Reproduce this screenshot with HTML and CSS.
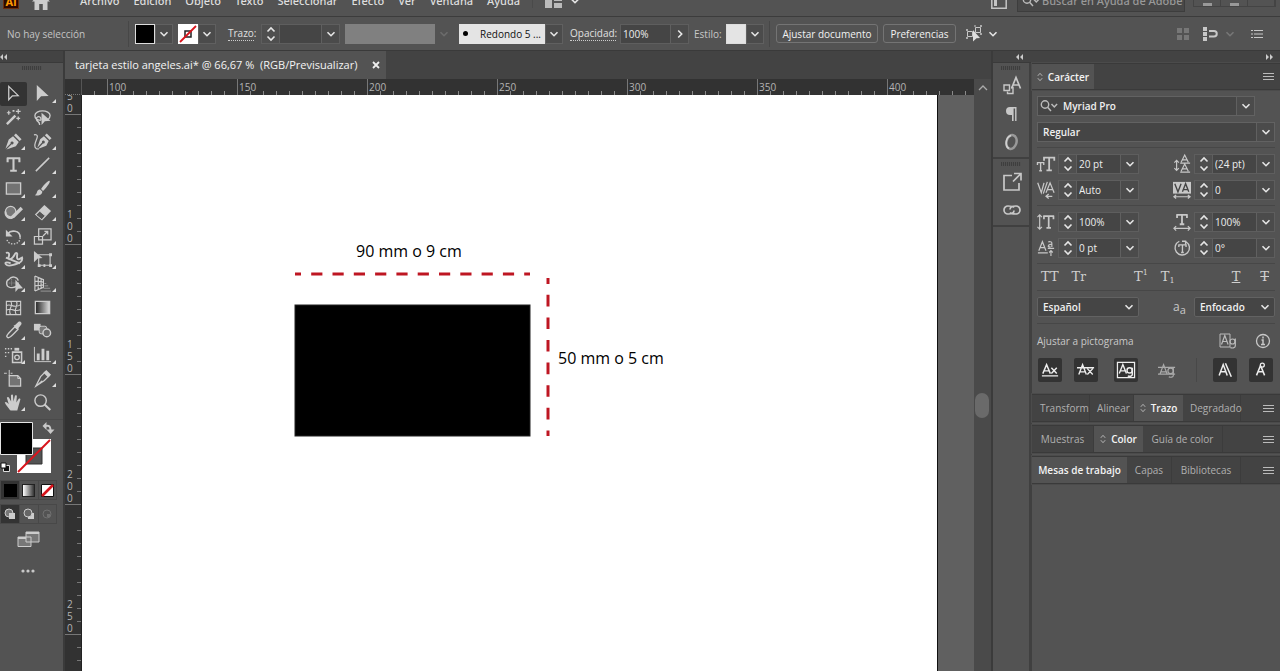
FILE: index.html
```html
<!DOCTYPE html>
<html lang="es">
<head>
<meta charset="utf-8">
<title>tarjeta estilo angeles.ai</title>
<link rel="stylesheet" href="styles.css">
</head>
<body>
<svg class="defs" aria-hidden="true">
  <symbol id="down" viewBox="0 0 10 10"><path d="M1.5 3.2 5 6.7 8.5 3.2" fill="none" stroke="currentColor" stroke-width="1.6"/></symbol>
  <symbol id="spin" viewBox="0 0 10 16"><path d="M1.5 5.5 5 2l3.500 3.500M1.500 10.500 5 14l3.500-3.500" fill="none" stroke="currentColor" stroke-width="1.600"/></symbol>
  <symbol id="menu" viewBox="0 0 11 9"><path d="M0 1.500h11M0 4.500h11M0 7.500h11" stroke="currentColor"/></symbol>
  <symbol id="updown" viewBox="0 0 6 10"><path d="M.8 3.800 3 1.300l2.200 2.500M.8 6.200 3 8.700l2.200-2.500" fill="none" stroke="currentColor"/></symbol>
  <symbol id="lens" viewBox="0 0 18 12"><circle cx="5" cy="4.500" r="3.700" fill="none" stroke="currentColor" stroke-width="1.400"/><path d="M7.600 7.300 11 11M11.500 4l2.800 3 2.800-3" fill="none" stroke="currentColor" stroke-width="1.500"/></symbol>
  <linearGradient id="fade"><stop offset="0" stop-color="#222"/><stop offset="1" stop-color="#ddd"/></linearGradient>
</svg>

<div class="app">
  <header class="menubar">
    <span class="logo">Ai</span>
    <button class="home" aria-label="Inicio"><svg width="18" height="18" viewBox="0 0 18 18"><path d="M9 1 0 9.500h2.500V18h4.700v-6h3.600v6h4.700V9.500H18z" fill="#ccc"/></svg></button>
    <nav class="menus">
      <a href="#">Archivo</a><a href="#">Edición</a><a href="#">Objeto</a><a href="#">Texto</a><a href="#">Seleccionar</a><a href="#">Efecto</a><a href="#">Ver</a><a href="#">Ventana</a><a href="#">Ayuda</a>
    </nav>
    <button class="arrange" aria-label="Organizar documentos"><svg width="17" height="14" viewBox="0 0 17 14"><path d="M0 0h7v14H0zM9 0h8v7H9zM9 9h8v5H9z" fill="#bbb"/></svg><svg class="chev"><use href="#down"/></svg></button>
    <span class="grow"></span>
    <button class="workspace" aria-label="Espacio de trabajo"><svg width="16" height="16" viewBox="0 0 16 16"><path d="M.8.8h14.400v14.400H.8z" fill="none" stroke="#c4c4c4" stroke-width="1.500"/><path d="M3 3h3v10H3z" fill="#c4c4c4"/></svg></button>
    <label class="help"><svg width="18" height="12"><use href="#lens"/></svg><input type="text" placeholder="Buscar en Ayuda de Adobe" aria-label="Buscar en Ayuda de Adobe"></label>
    <div class="window-buttons"><button aria-label="Minimizar"><i></i></button><button aria-label="Maximizar"><i></i></button><button aria-label="Cerrar"></button></div>
  </header>

  <section class="control">
    <span class="selection">No hay selección</span>
    <span class="sep"></span>
    <span class="swatch-pick"><button class="swatch black" aria-label="Relleno"></button><button class="dd" aria-label="Opciones de relleno"><svg class="chev"><use href="#down"/></svg></button></span>
    <span class="swatch-pick"><button class="swatch" aria-label="Trazo"><svg width="20" height="20" viewBox="0 0 20 20"><path fill="#fff" d="M0 0h20v20H0z"/><path d="M7 7h6v6H7z" fill="none" stroke="#222" stroke-width="1.500"/><path d="M2 18 18 2" stroke="#d8141c" stroke-width="1.800"/></svg></button><button class="dd" aria-label="Opciones de trazo"><svg class="chev"><use href="#down"/></svg></button></span>
    <label class="dotted stroke-label" for="weight">Trazo:</label>
    <span class="field weight"><button class="spin" aria-label="Cambiar grosor"><svg width="10" height="16"><use href="#spin"/></svg></button><input id="weight" type="text"><button class="dd" aria-label="Grosores"><svg class="chev"><use href="#down"/></svg></button></span>
    <span class="profile"><span class="blank"></span><svg class="chev"><use href="#down"/></svg></span>
    <span class="brush"><button class="brush-name"><i></i>Redondo 5 ...</button><button class="dd" aria-label="Pinceles"><svg class="chev"><use href="#down"/></svg></button></span>
    <label class="dotted opacity-label" for="opacity">Opacidad:</label>
    <span class="field opacity"><input id="opacity" type="text" value="100%"><button class="dd" aria-label="Más opacidad"><svg class="chev side"><use href="#down"/></svg></button></span>
    <span class="style-label">Estilo:</span>
    <span class="swatch-pick"><button class="swatch pale" aria-label="Estilo"></button><button class="dd" aria-label="Estilos gráficos"><svg class="chev"><use href="#down"/></svg></button></span>
    <span class="sep"></span>
    <button class="push">Ajustar documento</button>
    <button class="push prefs">Preferencias</button>
    <button class="similar" aria-label="Seleccionar objetos similares"><svg width="17" height="17" viewBox="0 0 17 17"><g fill="none" stroke="#c8c8c8"><path d="M1.500 6.500h5v5h-5zM9.500 2.500h5v5h-5z"/><path d="M0 5h2M0 13h2M8 1h2M14 1h2M14 9h2M1 4v2M1 12v2M15 0v2M15 8v2"/></g><path d="m7 5 7 8-3.500.2L7 16.500z" fill="#ddd"/></svg><svg class="chev"><use href="#down"/></svg></button>
    <span class="grow"></span>
    <span class="tail"><svg width="12" height="12" viewBox="0 0 12 12"><path d="M0 0h5v5H0zM7 0h5v5H7zM0 7h5v5H0zM7 7h5v5H7z" fill="#777"/></svg>
    <svg width="14" height="14" viewBox="0 0 14 14"><path d="M0 0h4v4H0zM0 5h4v4H0zM0 10h4v4H0z" fill="#c8c8c8"/><path d="M6 4h5a2.500 2.500 0 0 1 0 5.500H6" fill="none" stroke="#c8c8c8" stroke-width="2"/></svg>
    <svg class="chev dim"><use href="#down"/></svg>
    <button class="list" aria-label="Opciones del panel"><svg width="12" height="10" viewBox="0 0 12 10"><path d="M0 1.500h2M3 1.500h9M0 5h2M3 5h9M0 8.500h2M3 8.500h9" stroke="#c8c8c8" stroke-width="1.200"/></svg></button></span>
  </section>

  <main class="work">
    <aside class="toolbox">
      <div class="strip"><svg width="7" height="6" viewBox="0 0 7 6"><path d="M3 0v6L0 3zM7 0v6L4 3z" fill="#ccc"/></svg></div>
      <div class="grip"></div>
      <div class="tools">
        <button class="active" aria-label="Selección"><svg viewBox="0 0 20 20"><path d="M5 2.500v14l3.800-4 6.200-.3z" fill="none" stroke="#d0d0d0" stroke-width="1.300"/></svg></button>
        <button class="more" aria-label="Selección directa"><svg viewBox="0 0 20 20"><path d="M4 1v17l4.500-5 8-.5z" fill="#ccc"/></svg></button>
        <button aria-label="Varita mágica"><svg viewBox="0 0 20 20"><path d="m3 17 9-9" stroke="#ccc" stroke-width="2.600"/><path d="M15 1v5M12.500 3.500h5M5 3v4M3 5h4M15 9v4M13 11h4" stroke="#ccc" stroke-width="1.300"/><path d="M9 2h2v2H9zM10 6l2 2" fill="#ccc"/></svg></button>
        <button aria-label="Lazo"><svg viewBox="0 0 20 20"><path d="M8 13c-4 0-6-2-6-5s4-5 8-5 8 2 8 5-2 4-3 5M8 13c1-1 0-4-2-4s-3 2-2 4 3 1 3 5" fill="none" stroke="#ccc" stroke-width="1.400"/><path d="M9 5v13l3.500-4 6-.5z" fill="#ccc"/></svg></button>
        <button class="more" aria-label="Pluma"><svg viewBox="0 0 20 20"><path d="m12.500 1.500 6 6-2 2-6-6z" fill="#ccc"/><path d="M9.500 4.500 15.500 10.500 12.500 15 2.500 18.500 8 13a1.600 1.600 0 1 0-1-1L1.500 17.500 5 8z" fill="#ccc"/></svg></button>
        <button class="more" aria-label="Curvatura"><svg viewBox="0 0 20 20"><path d="m14.500 1.500 5 5-2 2-5-5z" fill="#ccc"/><path d="m11.500 4.500 5 5-2.500 5L5 18l5.500-6a1.500 1.500 0 1 0-1-1L4.500 16.500 7.500 7.500z" fill="#ccc"/><path d="M1 3c6-1 3 4 1.500 8S2 18 6 18" fill="none" stroke="#ccc" stroke-width="1.300"/></svg></button>
        <button class="more" aria-label="Texto"><svg viewBox="0 0 20 20"><path d="M3 3.500h14M3.800 3v4.500M16.200 3v4.500M10 3.500V17M6.500 16.500h7" stroke="#ccc" stroke-width="2.200" fill="none"/></svg></button>
        <button class="more" aria-label="Línea"><svg viewBox="0 0 20 20"><path d="M3 17 17 3" stroke="#ccc" stroke-width="1.600"/></svg></button>
        <button class="more" aria-label="Rectángulo"><svg viewBox="0 0 20 20"><path d="M2.500 4h15v12h-15z" fill="#737373" stroke="#ccc" stroke-width="1.400"/></svg></button>
        <button class="more" aria-label="Pincel"><svg viewBox="0 0 20 20"><path d="M17.500 2c1.500 1-5 9-7 10.500L8.500 10.500C10 8 16 1 17.500 2zM7.500 11l2.300 2.200c0 4-4.800 4.800-7.800 3.800 2-1 2-2.500 2.500-4s1.500-2 3-2z" fill="#ccc"/></svg></button>
        <button class="more" aria-label="Shaper"><svg viewBox="0 0 20 20"><circle cx="7" cy="9" r="5.500" fill="#777" stroke="#ccc" stroke-width="1.300"/><path d="m7 17 1.500-4L17.500 4l2.500 2.500L11 15.500z" fill="#ccc"/><path d="M1.500 9c0 6 4 8 7.500 6" fill="none" stroke="#ccc" stroke-width="2"/></svg></button>
        <button class="more" aria-label="Borrador"><svg viewBox="0 0 20 20"><path d="m2 12 10-10 7 6.500L9.500 18.500z" fill="#ccc"/><path d="M3 12.500 7 8.500l6 5-3.800 4z" fill="#555" stroke="#ccc"/></svg></button>
        <button class="more" aria-label="Rotar"><svg viewBox="0 0 20 20"><path d="M4 7c3-4 13-4 13 4" fill="none" stroke="#ccc" stroke-width="1.700"/><path d="M2 3v7h7z" fill="#ccc"/><path d="M17 11c0 9-14 9-14 1" fill="none" stroke="#ccc" stroke-width="1.400" stroke-dasharray="1.500 1.500"/></svg></button>
        <button class="more" aria-label="Escala"><svg viewBox="0 0 20 20"><path d="M6 2h13v11.500H6zM1.500 10h8.500v8H1.500z" fill="none" stroke="#ccc" stroke-width="1.300"/><path d="m10.500 9.500 5-5M12 4.500h3.500v3.500" fill="none" stroke="#ccc" stroke-width="1.300"/></svg></button>
        <button class="more" aria-label="Anchura"><svg viewBox="0 0 20 20"><path d="M2 3c3-1 4 1 3 4s1 4 4 1 2-5 4-5 0 4 1 6 3 0 5-1c1 4-3 6-7 7s-8 3-10 0 3-2 5-1M2 8l15 6" fill="none" stroke="#ccc" stroke-width="2"/></svg></button>
        <button class="more" aria-label="Transformación libre"><svg viewBox="0 0 20 20"><path d="M6 5h12v11H6z" fill="none" stroke="#ccc" stroke-width="1.200"/><path d="M17 3.500h3v3h-3zM17 15h3v3h-3zM5 15h3v3H5zM11 15h2v3h-2zM1 1v12l4-4 5-.5z" fill="#ccc"/></svg></button>
        <button class="more" aria-label="Creador de formas"><svg viewBox="0 0 20 20"><path d="M6 14a4.500 4.500 0 0 1-.5-8.500C8 1.500 14 3 15 7M6 14c5 1 9-1 9-5" fill="none" stroke="#ccc" stroke-width="1.400"/><path d="M3 9.500h9M8 5v8" stroke="#999" stroke-dasharray="1 1"/><path d="M12 6v13l3-3.500 5-.5z" fill="#ccc"/></svg></button>
        <button class="more" aria-label="Rejilla de perspectiva"><svg viewBox="0 0 20 20"><path d="M2 2v16M2 2l9 4v8L2 18M5.500 3.500v13M8.500 5v10M2 7.500l9 1M2 12.500l9-1" fill="none" stroke="#ccc" stroke-width="1.200"/><path d="M12 10h2M12 12.500h4M11 15h7M8 18h11" stroke="#999"/></svg></button>
        <button aria-label="Malla"><svg viewBox="0 0 20 20"><path d="M2.500 3.500h15v14h-15zM2.500 8c5-3 8 4 15-1M2.500 13c6-4 8 3 15-1M7 3.500c4 5-4 8 0 14M13 3.500c3 5-4 8 0 14" fill="none" stroke="#ccc" stroke-width="1.200"/></svg></button>
        <button aria-label="Degradado"><svg viewBox="0 0 20 20"><path d="M2.500 3.500h15v13h-15z" fill="url(#fade)" stroke="#ccc" stroke-width="1.400"/></svg></button>
        <button class="more" aria-label="Cuentagotas"><svg viewBox="0 0 20 20"><path d="M3.500 17c-2-1 1-4 8-11l3 3C8 16 5 19 3.500 17z" fill="none" stroke="#ccc" stroke-width="1.400"/><path d="m10 5 2-1 3-3c2-1.500 4.500 1 3 3l-2.500 3-.5 2.500z" fill="#ccc"/></svg></button>
        <button aria-label="Fusión"><svg viewBox="0 0 20 20"><path d="M1 3h7v7H1z" fill="#ccc"/><rect x="6.500" y="5.500" width="8" height="8" rx="2" fill="#777" stroke="#ccc"/><circle cx="14.500" cy="12.500" r="4" fill="#666" stroke="#ccc" stroke-width="1.500"/></svg></button>
        <button class="more" aria-label="Rociar símbolos"><svg viewBox="0 0 20 20"><path d="M9 7.500h9.500v11H9z" fill="none" stroke="#ccc" stroke-width="1.600"/><circle cx="13.700" cy="13" r="2.400" fill="none" stroke="#ccc" stroke-width="1.400"/><path d="M11 3h5v3h-5z" fill="#ccc"/><path d="M1 4h8M1 8h6M1 12h2" stroke="#ccc" stroke-width="1.500" stroke-dasharray="1.500 1.500"/></svg></button>
        <button class="more" aria-label="Gráfica"><svg viewBox="0 0 20 20"><path d="M1.500 2v15.500H19" fill="none" stroke="#ccc"/><path d="M4 9h3v7H4zM9 4h3v12H9zM14 6h3v10h-3z" fill="#ccc"/></svg></button>
        <button aria-label="Mesa de trabajo"><svg viewBox="0 0 20 20"><path d="M5.500 7h9l3 3v8h-12z" fill="#737373" stroke="#ccc" stroke-width="1.300"/><path d="M14.500 7v3h3M5.500 1v6M0 4.500h3M7 4.500h2" fill="none" stroke="#ccc"/></svg></button>
        <button class="more" aria-label="Sector"><svg viewBox="0 0 20 20"><path d="M3 18 8 8l5-5 4 4-5 5z" fill="none" stroke="#ccc" stroke-width="1.300"/><path d="m11 4 3-3 5 5-3 3zM3 18l6-6 2 1z" fill="#ccc"/></svg></button>
        <button class="more" aria-label="Mano"><svg viewBox="0 0 20 20"><path d="M6 17.500C4.500 15 2 13 .8 10c1-1.200 2.200-.5 4.200 1.800L3 5c.8-1.200 2-.8 2.500.3L7.500 9 7.300 2.500c.6-1.300 2.100-1 2.200.3L10 9l1.500-6c1-1 2.200-.5 2 .7L13 10l2.500-4c1.200-.6 2.200.2 1.600 1.400L15.500 13l-1.500 5.500H7z" fill="#ccc"/></svg></button>
        <button aria-label="Zoom"><svg viewBox="0 0 20 20"><circle cx="8" cy="8" r="6" fill="none" stroke="#ccc" stroke-width="1.500"/><path d="m12.200 12 6 6" stroke="#ccc" stroke-width="2.200"/></svg></button>
      </div>
      <button class="colors" aria-label="Relleno y trazo"><svg width="56" height="54" viewBox="0 0 56 54"><path d="M17 18h34v34H17z" fill="#fff"/><path d="M26 27h16v16H26z" fill="#535353" stroke="#333"/><path d="M18 51 50 19" stroke="#d8141c" stroke-width="2"/><path d="M.5 1.500h32v32H.5z" fill="#000" stroke="#e4e4e4"/><path d="M45 5c5-1 5.500 1 5.500 5" fill="none" stroke="#c8c8c8" stroke-width="2"/><path d="M46.500 1v8l-4-4zM46.500 8.500h8L50.500 13z" fill="#c8c8c8"/><path d="M4.500 44.500h5v6h-6v-3" fill="#111" stroke="#ddd"/><path d="M1 42h5v5H1z" fill="#fff" stroke="#111"/></svg></button>
      <div class="modes paint"><button class="on" aria-label="Color"><i class="solid"></i></button><button aria-label="Degradado"><i class="grad"></i></button><button aria-label="Ninguno"><svg width="13" height="13" viewBox="0 0 13 13"><path d="M.5.5h12v12H.5z" fill="#fff" stroke="#111"/><path d="M1 12 12 1" stroke="#d8141c" stroke-width="2.600"/></svg></button></div>
      <div class="modes draw"><button class="on" aria-label="Dibujar normal"><svg width="12" height="12" viewBox="0 0 12 12"><circle cx="5" cy="5" r="4" fill="#777" stroke="#ccc"/><path d="M5 5h6v6H5z" fill="#ccc"/></svg></button><button aria-label="Dibujar detrás"><svg width="12" height="12" viewBox="0 0 12 12"><path d="M5 5h6v6H5z" fill="#ccc"/><circle cx="5" cy="5" r="4" fill="#666" stroke="#ccc"/></svg></button><button aria-label="Dibujar dentro" disabled><svg width="12" height="12" viewBox="0 0 12 12"><circle cx="6" cy="6" r="4" fill="none" stroke="#707070"/><path d="M6 6h3v3H6z" fill="#707070"/></svg></button></div>
      <button class="screen" aria-label="Modo de pantalla"><svg width="23" height="16" viewBox="0 0 23 16"><path d="M1 6h13v9.500H1zM9 1h13v10H9z" fill="#777" stroke="#ccc"/><path d="M9 1h13v2H9zM1 6h8v2H1z" fill="#ccc"/></svg></button>
      <button class="screen dots" aria-label="Editar barra de herramientas"><svg width="14" height="4" viewBox="0 0 14 4"><circle cx="2" cy="2" r="1.600"/><circle cx="7" cy="2" r="1.600"/><circle cx="12" cy="2" r="1.600"/></svg></button>
    </aside>

    <section class="document">
      <div class="tabs"><div class="tab"><span>tarjeta estilo angeles.ai* @ 66,67 %&nbsp; (RGB/Previsualizar)</span><button aria-label="Cerrar documento"><svg width="8" height="8" viewBox="0 0 8 8"><path d="m1 1 6 6M7 1 1 7" stroke="#eee" stroke-width="1.800"/></svg></button></div></div>
      <div class="sheet">
        <div class="corner"></div>
        <div class="ruler-x"><span>100</span><span>150</span><span>200</span><span>250</span><span>300</span><span>350</span><span>400</span></div>
        <div class="ruler-y"><span>50</span><span>100</span><span>150</span><span>200</span><span>250</span><span></span></div>
        <div class="canvas">
          <svg class="artboard" role="img" aria-label="Tarjeta de 90 por 50 mm">
            <text x="274" y="162">90 mm o 9 cm</text>
            <text x="476" y="269">50 mm o 5 cm</text>
            <path d="M213 179h235" class="cut" stroke-dasharray="6 10.200 11.200 10.100 11.200 10.100 11.200 10.100 11.200 10.100 11.200 10.100 11.200 10.100 11.200 10.100 11.200 10.100 11.200 10.100 11.200 10.100 6"/>
            <path d="M466 183v158" class="cut" stroke-dasharray="6 10.800 11.600 11 11.600 11 11.600 11 11.600 11 11.600 11 11.600 11 6"/>
            <rect x="213" y="210" width="235" height="131" fill="#000" stroke="#222"/>
          </svg>
          <div class="outside"></div>
        </div>
        <div class="scroll"><svg width="10" height="6" viewBox="0 0 10 6"><path d="M1 5 5 1l4 4" fill="none" stroke="#aaa" stroke-width="1.300"/></svg><i class="thumb"></i></div>
      </div>
    </section>

    <div class="right">
      <div class="right-strip"><svg width="7" height="6" viewBox="0 0 7 6"><path d="M3 0v6L0 3zM7 0v6L4 3z" fill="#ccc"/></svg><svg width="7" height="6" viewBox="0 0 7 6"><path d="M0 0v6l3-3zM4 0v6l3-3z" fill="#ccc"/></svg></div>
      <div class="right-row">
      <aside class="dock">
        <div class="dock-group"><div class="grip"></div>
          <button aria-label="Estilos de carácter"><svg viewBox="0 0 20 20"><path d="M2 9h5.500v5.500H2z" fill="none" stroke="#c8c8c8" stroke-width="1.400"/><path d="M9 11.500h2v6H5.500v-2" fill="none" stroke="#c8c8c8" stroke-width="1.400"/><path d="m9.500 12.500 4.500-11 4.500 11M11 9h6" fill="none" stroke="#c8c8c8" stroke-width="1.700"/></svg></button>
          <button aria-label="Párrafo"><svg viewBox="0 0 20 20"><path d="M14.500 3H8a4 4 0 0 0 0 8h2v6h1.600V4.500h1.500V17h1.400z" fill="#c8c8c8"/></svg></button>
          <button aria-label="OpenType"><svg viewBox="0 0 20 20"><ellipse cx="9.500" cy="10" rx="5" ry="7" transform="rotate(15 9.500 10)" fill="none" stroke="#999" stroke-width="2.500"/><path d="M9 3.500c-6 2-6 11-2 13" fill="none" stroke="#d0d0d0" stroke-width="1.600"/></svg></button>
        </div>
        <div class="dock-group"><div class="grip"></div>
          <button aria-label="Exportar recursos"><svg viewBox="0 0 20 20"><path d="M10 3.500H2V18h15v-7M12 1.500h7v7M18.500 2 11 9.500" fill="none" stroke="#c8c8c8" stroke-width="1.700"/></svg></button>
          <button aria-label="Vínculos"><svg viewBox="0 0 20 20"><path d="M12 7.500C11 6 9 6 6 6a4 4 0 0 0 0 8c3 0 6-.5 6-3.500M8 12.500c1 1.500 3 1.500 6 1.500a4 4 0 0 0 0-8c-3 0-6 .5-6 3.500" fill="none" stroke="#c8c8c8" stroke-width="1.700"/></svg></button>
        </div>
      </aside>

      <aside class="panels">
        <div class="panel-tabs first"><button class="current"><svg width="6" height="10"><use href="#updown"/></svg>Carácter</button><span class="grow"></span><button class="burger" aria-label="Menú"><svg width="11" height="9"><use href="#menu"/></svg></button></div>
        <div class="character">
          <div class="combo family"><svg width="18" height="12"><use href="#lens"/></svg><input type="text" value="Myriad Pro" aria-label="Familia de fuentes"><button class="dd" aria-label="Familias"><svg class="chev"><use href="#down"/></svg></button></div>
          <div class="combo"><input type="text" value="Regular" aria-label="Estilo de fuente"><button class="dd" aria-label="Estilos"><svg class="chev"><use href="#down"/></svg></button></div>
          <hr>
          <div class="metrics">
            <label for="m1"><svg viewBox="0 0 20 20"><path d="M0 8.500h8M.5 8v3M7.500 8v3M4 8.500V18M2.500 17.500h3" fill="none" stroke="#c8c8c8" stroke-width="1.500"/><path d="M7 3h13M7.800 2v4.500M19.200 2v4.500M13.500 3v14M10.500 17h6" fill="none" stroke="#c8c8c8" stroke-width="2"/></svg></label>
            <span class="field"><button class="spin" aria-label="Cambiar tamaño"><svg width="10" height="16"><use href="#spin"/></svg></button><input id="m1" type="text" value="20 pt"><button class="dd" aria-label="Tamaños"><svg class="chev"><use href="#down"/></svg></button></span>
            <label for="m2"><svg viewBox="0 0 20 20"><path d="M4 6v11M1.500 8.500 4 6l2.500 2.500M1.500 14.500 4 17l2.500-2.500" fill="none" stroke="#c8c8c8" stroke-width="1.300"/><path d="m9 8 4-8 4 8M10.500 5.500h5M9 18l4-8 4 8M10.500 15.500h5M8 9h11M8 19h11" fill="none" stroke="#c8c8c8" stroke-width="1.300"/></svg></label>
            <span class="field"><button class="spin" aria-label="Cambiar interlineado"><svg width="10" height="16"><use href="#spin"/></svg></button><input id="m2" type="text" value="(24 pt)"><button class="dd" aria-label="Interlineados"><svg class="chev"><use href="#down"/></svg></button></span>
            <label for="m3"><svg viewBox="0 0 20 20"><path d="m.8 2 4 11 3-11M11.500 1 7 14M10 13l4.500-11L19 13M11.500 9.500h6M10 17h7M13 14.500 10 17l3 2.500" fill="none" stroke="#c8c8c8" stroke-width="1.400"/></svg></label>
            <span class="field"><button class="spin" aria-label="Cambiar kerning"><svg width="10" height="16"><use href="#spin"/></svg></button><input id="m3" type="text" value="Auto"><button class="dd" aria-label="Kerning"><svg class="chev"><use href="#down"/></svg></button></span>
            <label for="m4"><svg viewBox="0 0 20 20"><path d="M0 1h20v13H0z" fill="#c8c8c8"/><path d="m2 3 3.500 9L9 3M10.500 12 14 3l3.500 9M12 9.500h4.500" fill="none" stroke="#444" stroke-width="1.500"/><path d="M1 17.500h18M3.500 15.500l-2.500 2 2.500 2M16.500 15.500l2.500 2-2.500 2" fill="none" stroke="#c8c8c8" stroke-width="1.300"/></svg></label>
            <span class="field"><button class="spin" aria-label="Cambiar tracking"><svg width="10" height="16"><use href="#spin"/></svg></button><input id="m4" type="text" value="0"><button class="dd" aria-label="Tracking"><svg class="chev"><use href="#down"/></svg></button></span>
          </div>
          <hr>
          <div class="metrics">
            <label for="m5"><svg viewBox="0 0 20 20"><path d="M3 2v16M.5 4.500 3 2l2.500 2.500M.5 15.500 3 18l2.500-2.500" fill="none" stroke="#c8c8c8" stroke-width="1.300"/><path d="M7 3.500h12M7.700 3v4M18.300 3v4M13 3.500v13M10.500 16.500h5" fill="none" stroke="#c8c8c8" stroke-width="1.900"/></svg></label>
            <span class="field"><button class="spin" aria-label="Cambiar escala vertical"><svg width="10" height="16"><use href="#spin"/></svg></button><input id="m5" type="text" value="100%"><button class="dd" aria-label="Escalas verticales"><svg class="chev"><use href="#down"/></svg></button></span>
            <label for="m6"><svg viewBox="0 0 20 20"><path d="M4 2h12M4.500 1.500v4M15.500 1.500v4M10 2v10.500M7.500 12.500h5" fill="none" stroke="#c8c8c8" stroke-width="2"/><path d="M1 17h18M3.500 14.500 1 17l2.500 2.500M16.500 14.500 19 17l-2.500 2.500" fill="none" stroke="#c8c8c8" stroke-width="1.300"/></svg></label>
            <span class="field"><button class="spin" aria-label="Cambiar escala horizontal"><svg width="10" height="16"><use href="#spin"/></svg></button><input id="m6" type="text" value="100%"><button class="dd" aria-label="Escalas horizontales"><svg class="chev"><use href="#down"/></svg></button></span>
            <label for="m7"><svg viewBox="0 0 20 20"><path d="m2 13 4-10 4 10M3.500 9.500h5M1 15.500h11M12.500 3.500c1-.8 4-.8 4 1V9M16.500 6c-5-.5-5 4-1.500 2.500M12 10.500h7M15.500 19v-6M13.500 15l2-2 2 2" fill="none" stroke="#c8c8c8" stroke-width="1.300"/></svg></label>
            <span class="field"><button class="spin" aria-label="Cambiar línea de base"><svg width="10" height="16"><use href="#spin"/></svg></button><input id="m7" type="text" value="0 pt"><button class="dd" aria-label="Líneas de base"><svg class="chev"><use href="#down"/></svg></button></span>
            <label for="m8"><svg viewBox="0 0 20 20"><path d="M7 2.500a8 8 0 1 0 7.500.5M10 2.500h4v4" fill="none" stroke="#c8c8c8" stroke-width="1.500"/><path d="M6 6.500h9M6.500 6v3M14.500 6v3M10.500 6.500V15M9 15h3" fill="none" stroke="#c8c8c8" stroke-width="1.500"/></svg></label>
            <span class="field"><button class="spin" aria-label="Cambiar rotación"><svg width="10" height="16"><use href="#spin"/></svg></button><input id="m8" type="text" value="0°"><button class="dd" aria-label="Rotaciones"><svg class="chev"><use href="#down"/></svg></button></span>
          </div>
          <hr>
          <div class="caps">
            <button aria-label="Todo en mayúsculas">TT</button><button aria-label="Versalitas">T<small>r</small></button><button class="super" aria-label="Superíndice">T<sup>1</sup></button><button class="sub" aria-label="Subíndice">T<sub>1</sub></button><button class="under" aria-label="Subrayado"><u>T</u></button><button class="strike" aria-label="Tachado"><s>T</s></button>
          </div>
          <hr>
          <div class="language">
            <span class="select"><select aria-label="Idioma"><option>Español</option></select><svg class="chev"><use href="#down"/></svg></span>
            <label for="aa" class="aa"><span>a</span><sub>a</sub></label>
            <span class="select"><select id="aa"><option>Enfocado</option></select><svg class="chev"><use href="#down"/></svg></span>
          </div>
          <hr>
          <div class="snap-head"><span>Ajustar a pictograma</span><span class="grow"></span>
            <button aria-label="Ajuste visible"><svg width="18" height="16" viewBox="0 0 18 16"><path d="M1 1h10v13H1z" fill="none" stroke="#bbb"/><path d="m2.500 11.500 3.300-9 3.300 9M3.500 8.500h4.500" fill="none" stroke="#bbb" stroke-width="1.200"/><circle cx="13.500" cy="8.500" r="2.500" fill="none" stroke="#bbb" stroke-width="1.200"/><path d="M16.300 5.500V13c0 2-3.300 2.500-5 1.500" fill="none" stroke="#bbb" stroke-width="1.200"/></svg></button>
            <button aria-label="Información"><svg width="16" height="16" viewBox="0 0 16 16"><circle cx="8" cy="8" r="6.500" fill="none" stroke="#c8c8c8" stroke-width="1.300"/><path d="M8 3.500v2M6.500 7H8v4.500M6 11.500h4" fill="none" stroke="#c8c8c8" stroke-width="1.500"/></svg></button>
          </div>
          <div class="snap">
            <button class="on" aria-label="Línea de base"><svg viewBox="0 0 20 20"><path d="M2 14 6.200 4l4.200 10M3.500 11h5.500M11.500 7.500l6 6.500M17.500 7.500l-6 6.500M1 16.500h18" fill="none" stroke="#eee" stroke-width="1.600"/></svg></button>
            <button class="on" aria-label="Altura de x"><svg viewBox="0 0 20 20"><path d="M2 15 6.200 4l4.200 11M3.500 12h5.500M11.500 8.500l6 6.500M17.500 8.500l-6 6.500M0 7.500h19" fill="none" stroke="#eee" stroke-width="1.500"/></svg></button>
            <button class="on gap" aria-label="Límites del pictograma"><svg viewBox="0 0 20 20"><path d="M.5 1.500h19v17H.5z" fill="none" stroke="#eee" stroke-width="1.400"/><path d="M2.500 14 6.500 4l4 10M4 11h5M17 7.500V15c0 2-3 2.500-5 1.500" fill="none" stroke="#eee" stroke-width="1.600"/><circle cx="14" cy="10.500" r="2.900" fill="none" stroke="#eee" stroke-width="1.600"/></svg></button>
            <button aria-label="Guías de proximidad"><svg viewBox="0 0 20 20"><path d="M2 15 6.200 4l4.200 11M3.500 12h5.500M17 7.500V16c0 2-3 2.500-5 1.500M0 7h19M0 14.500h19" fill="none" stroke="#aaa" stroke-width="1.300"/><circle cx="14" cy="11" r="3" fill="none" stroke="#aaa" stroke-width="1.300"/></svg></button>
            <span class="divider"></span>
            <button class="on" aria-label="Guías angulares"><svg viewBox="0 0 20 20"><path d="M3.500 16 8 4l4.500 12M5 12h6M10.500 2.500 17 17.500" fill="none" stroke="#eee" stroke-width="1.700"/></svg></button>
            <button class="on" aria-label="Punto de anclaje"><svg viewBox="0 0 20 20"><path d="M5 16 9.500 5 14 16M6.500 12h6" fill="none" stroke="#eee" stroke-width="1.700"/><circle cx="11.500" cy="4.500" r="2.200" fill="#333" stroke="#eee" stroke-width="1.400"/></svg></button>
          </div>
        </div>
        <div class="panel-tabs"><button class="t1">Transform</button><button class="t2">Alinear</button><button class="current t3"><svg width="6" height="10"><use href="#updown"/></svg>Trazo</button><button class="t4">Degradado</button><span class="grow"></span><button class="burger" aria-label="Menú"><svg width="11" height="9"><use href="#menu"/></svg></button></div>
        <div class="panel-tabs"><button class="t5">Muestras</button><button class="current t6"><svg width="6" height="10"><use href="#updown"/></svg>Color</button><button class="t7">Guía de color</button><span class="grow"></span><button class="burger" aria-label="Menú"><svg width="11" height="9"><use href="#menu"/></svg></button></div>
        <div class="panel-tabs"><button class="current t8">Mesas de trabajo</button><button class="t9">Capas</button><button class="t10">Bibliotecas</button><span class="grow"></span><button class="burger" aria-label="Menú"><svg width="11" height="9"><use href="#menu"/></svg></button></div>
        <div class="empty"></div>
      </aside>
      </div>
    </div>
  </main>
</div>
</body>
</html>
```

FILE: styles.css
```css
* { box-sizing: border-box; }
body { margin: 0; background: #535353; color: #dedede; font: 500 10px/14px "Open Sans", sans-serif; overflow: hidden; }
button, input, select { font: inherit; color: inherit; background: none; border: 0; padding: 0; margin: 0; min-width: 0; border-radius: 0; }
button { display: flex; align-items: center; justify-content: center; flex: none; white-space: nowrap; }
svg { display: block; flex: none; overflow: visible; }
.defs { position: absolute; width: 0; height: 0; }
.app { display: flex; flex-direction: column; height: 100vh; }
.grow { flex: 1; }
.chev { width: 10px; height: 10px; color: #e6e6e6; }
.side { transform: rotate(-90deg); }
.dim { color: #777; }

.menubar { display: flex; align-items: center; flex: none; height: 32px; margin-top: -15px; font-family: "Noto Sans", sans-serif; font-size: 11px; border-bottom: 1px solid #3c3c3c; }
.logo { width: 16px; height: 16px; margin-left: 3px; background: #2c0800; color: #ff9a00; border: 1px solid #6a2f10; font-weight: 700; text-align: center; line-height: 16px; }
.home { width: 18px; margin-left: 13px; }
.menus { display: flex; gap: 14px; margin-left: 30px; }
.menus a { color: inherit; text-decoration: none; }
.arrange { gap: 8px; margin-left: 12px; padding-left: 12px; border-left: 1px solid #4a4a4a; }
.workspace { margin-right: 10px; }
.help { display: flex; align-items: center; gap: 2px; width: 168px; height: 22px; padding-left: 4px; background: #484848; border: 1px solid #3d3d3d; color: #bbb; }
.help input { flex: 1; }
.help input::placeholder { color: #999; }
.window-buttons { display: flex; align-self: stretch; height: 22px; margin: 0 4px 0 8px; border: 1px solid #444; border-top: 0; }
.window-buttons button { width: 27px; border-right: 1px solid #444; align-items: end; }
.window-buttons i { width: 9px; height: 3px; background: #999; }

.control { display: flex; align-items: center; flex: none; height: 34px; padding-right: 17px; border-bottom: 1px solid #3a3a3a; }
.selection { flex: none; width: 121px; margin-left: 7px; color: #c4c4c4; }
.sep { flex: none; width: 1px; height: 26px; background: #474747; margin-right: 6px; }
.swatch-pick { display: flex; flex: none; margin-right: 5px; }
.swatch { width: 20px; height: 20px; border: 1px solid #ddd; }
.black { background: #000; }
.pale { background: #e4e4e4; }
.dd { width: 18px; height: 20px; border: 1px solid #606060; background: #4b4b4b; }
.dotted { flex: none; border-bottom: 1px dotted #ccc; line-height: 13px; color: #e0e0e0; }
.stroke-label { width: 26px; margin: 0 7px; }
.field { display: flex; flex: none; height: 20px; border: 1px solid #5e5e5e; background: #454545; }
.field input { flex: 1; padding-left: 2px; color: #eee; }
.field .dd { height: 18px; width: 18px; border-width: 0 0 0 1px; }
.spin { width: 18px; background: #4f4f4f; border-right: 1px solid #5e5e5e; color: #e6e6e6; }
.weight { width: 79px; }
.profile { display: flex; align-items: center; flex: none; width: 114px; margin-left: 5px; gap: 4px; }
.profile .chev { color: #6c6c6c; }
.blank { width: 90px; height: 20px; background: #808080; }
.brush { display: flex; flex: none; }
.brush-name { width: 86px; height: 20px; gap: 12px; background: #e4e4e4; color: #111; }
.brush-name i { width: 5px; height: 5px; border-radius: 3px; background: #000; }
.opacity-label { width: 46px; margin: 0 4px 0 7px; }
.opacity { width: 69px; }
.style-label { flex: none; width: 28px; margin: 0 4px 0 5px; color: #c8c8c8; }
.push { width: 102px; height: 19px; border: 1px solid #747474; border-radius: 3px; color: #f2f2f2; }
.prefs { width: 73px; margin-left: 5px; }
.similar { gap: 5px; margin-left: 10px; }
.tail { display: flex; align-items: center; flex: none; }
.tail svg { margin-right: 8px; }
.tail svg:first-child { margin-right: 14px; }
.tail .list { margin-left: 8px; }
.tail .list svg { margin: 0; }

.work { display: flex; flex: 1; min-height: 0; }
.toolbox { display: flex; flex-direction: column; flex: none; width: 65px; border-right: 2px solid #3b3b3b; }
.strip { flex: none; height: 12px; padding-top: 3px; background: #434343; border-bottom: 1px solid #3a3a3a; }
.grip { flex: none; width: 20px; height: 4px; margin: 3px auto 0; background: repeating-linear-gradient(90deg, #3e3e3e 0 1px, #505050 1px 2px); }
.tools { display: grid; flex: none; grid-template: repeat(14, 1fr) / 27px 31px; height: 332px; margin-top: 12px; }
.tools button { position: relative; }
.tools svg { width: 19px; height: 19px; }
.tools .active { background: #333; border-radius: 2px; }
.more::after { content: ""; position: absolute; right: 2px; bottom: 3px; border: 2px solid; border-color: transparent #ddd #ddd transparent; }
.colors { justify-content: flex-start; margin-top: 5px; padding-top: 1px; border-top: 1px solid #4a4a4a; }
.modes { display: grid; grid-template-columns: repeat(3, 1fr); flex: none; width: 57px; height: 20px; border: 1px solid #484848; }
.modes button + button { border-left: 1px solid #484848; }
.paint { margin-top: 5px; }
.draw { margin-top: 4px; }
.on { background: #333; }
.solid { width: 13px; height: 13px; background: #000; }
.grad { width: 13px; height: 13px; border: 1px solid #222; background: linear-gradient(90deg, #fff, #333); }
.screen { width: 56px; margin-top: 7px; }
.dots { margin-top: 22px; fill: #c8c8c8; }

.document { display: flex; flex-direction: column; flex: 1; min-width: 0; }
.tabs { display: flex; flex: none; height: 28px; background: #434343; }
.tab { display: flex; align-items: center; justify-content: space-between; width: 321px; padding: 0 6px 0 10px; background: #535353; font-size: 11px; color: #f4f4f4; }
.sheet { display: grid; flex: 1; min-height: 0; grid-template: 16px 1fr / 17px 1fr 17px; }
.corner { background: #323232; border-right: 1px solid #555; border-bottom: 1px dotted #777; }
.ruler-x { display: flex; min-width: 0; overflow: hidden; padding-left: 25px; color: #b4b4b4; background: repeating-linear-gradient(90deg, transparent 0 12px, #8a8a8a 12px 13px) 0 100% / 100% 4px no-repeat #323232; }
.ruler-x span { flex: none; width: 130px; padding-left: 1px; border-left: 1px solid #777; line-height: 16px; }
.ruler-y { display: flex; flex-direction: column; min-height: 0; overflow: hidden; color: #b4b4b4; background: repeating-linear-gradient(transparent 0 12px, #777 12px 13px) 100% 7px / 4px 100% no-repeat #323232; border-right: 1px solid #222; }
.ruler-y span { display: flex; align-items: flex-end; flex: none; width: 17px; height: 130px; padding: 0 8px 0 2px; border-bottom: 1px solid #777; line-height: 12px; word-break: break-all; }
.ruler-y span:first-child { height: 20px; }
.canvas { display: flex; min-width: 0; min-height: 0; background: #fff; }
.artboard { flex: 1; min-width: 0; height: 100%; overflow: hidden; }
.artboard text { font: 16px "Open Sans", sans-serif; fill: #000; }
.cut { fill: none; stroke: #be1622; stroke-width: 3; }
.outside { flex: none; width: 37px; background: #606060; border-left: 1px solid #111; }
.scroll { position: relative; grid-column: 3; grid-row: 1 / 3; display: flex; justify-content: center; padding-top: 6px; background: #4a4a4a; }
.thumb { position: absolute; left: 1px; top: 53%; width: 14px; height: 25px; border-radius: 7px; background: #6a6a6a; }

.right { display: flex; flex-direction: column; flex: none; width: 289px; border-left: 2px solid #3b3b3b; }
.right-strip { display: flex; justify-content: space-between; flex: none; height: 12px; padding: 3px 7px 0 23px; background: #434343; border-bottom: 1px solid #3a3a3a; }
.right-row { display: flex; flex: 1; min-height: 0; }
.dock { flex: none; width: 39px; border-right: 3px solid #404040; }
.dock-group { display: flex; flex-direction: column; padding-bottom: 1px; border-bottom: 2px solid #404040; }
.dock-group button { height: 28px; padding-left: 2px; }
.dock-group .grip { margin-bottom: 2px; }
.dock-group svg { width: 20px; height: 20px; }
.panels { display: flex; flex-direction: column; flex: 1; min-width: 0; }
.panel-tabs { display: flex; flex: none; height: 28px; margin-bottom: 3px; background: #434343; border-bottom: 1px solid #3a3a3a; border-top: 1px solid #3a3a3a; color: #b0b0b0; outline: 1px solid #4b4b4b; }
.panel-tabs button { border-right: 1px solid #3c3c3c; }
.panel-tabs .current { background: #535353; color: #f4f4f4; gap: 5px; border: 0; font-weight: 600; }
.panel-tabs .current svg { color: #b4b4b4; }
.panel-tabs .burger { width: 24px; border: 0; color: #bbb; }
.panel-tabs.first { height: 27px; }
.first .current { width: 62px; }
.t1 { width: 58px; padding-left: 8px; justify-content: flex-start; }
.t2 { width: 44px; padding-left: 4px; }
.t3 { width: 49px; }
.t4 { width: 58px; padding-left: 7px; justify-content: flex-start; }
.t5 { width: 62px; }
.t6 { width: 49px; }
.t7 { width: 80px; }
.t8 { width: 95px; }
.t9 { width: 45px; }
.t10 { width: 69px; }
.character { display: flex; flex-direction: column; flex: none; padding: 3px 5px 1px; }
.character hr { width: 100%; height: 1px; margin: 0; border: 0; background: #474747; }
.combo { display: flex; align-items: center; height: 20px; margin-bottom: 5px; border: 1px solid #626262; background: #454545; color: #f0f0f0; font-weight: 600; }
.combo svg:first-child { margin-left: 2px; }
.combo input { flex: 1; padding-left: 5px; }
.combo .dd { height: 18px; border-width: 0 0 0 1px; }
.family { width: 218px; margin-bottom: 6px; }
.family > svg { color: #bbb; }
.combo .chev:first-child { margin: 0; }
.metrics { display: grid; grid-template-columns: 21px 81px 1fr 81px; gap: 6px 0; padding: 6px 0 5px; }
.metrics > label { display: flex; align-items: center; }
.metrics > label:nth-child(4n + 3) { padding-left: 34px; }
.metrics label svg { width: 18px; height: 18px; }
.caps { display: flex; align-items: center; height: 26px; padding: 0 6px 0 4px; color: #d0d0d0; font: 13px/20px "DejaVu Serif", serif; }
.caps button { font: inherit; align-items: baseline; }
.caps button + button { margin-left: 13px; }
.caps small { font-size: 12px; }
.caps sup, .caps sub { font-size: 8px; line-height: 12px; }
.caps sup { align-self: flex-start; }
.caps sub { align-self: flex-end; }
.caps button.super { margin-left: 48px; }
.caps button.under { margin-left: auto; }
.caps button.strike { margin-left: 20px; }
.language { display: grid; grid-template-columns: 102px 1fr 81px; height: 32px; align-items: center; }
.select { display: flex; align-items: center; height: 20px; padding-right: 4px; border: 1px solid #626262; border-radius: 2px; background: #454545; font-weight: 600; color: #f0f0f0; }
.select select { appearance: none; flex: 1; padding-left: 5px; }
.aa { display: flex; padding-left: 34px; font-size: 12px; color: #c8c8c8; }
.aa sub { align-self: flex-end; line-height: 8px; font-size: 11px; }
.snap-head { display: flex; align-items: center; height: 34px; gap: 18px; padding-right: 4px; color: #c8c8c8; }
.snap { display: flex; height: 35px; padding-left: 1px; }
.snap button { width: 24px; height: 24px; margin-right: 12px; border-radius: 2px; }
.snap .gap { margin: 0 17px 0 4px; }
.snap svg { width: 18px; height: 18px; }
.divider { width: 1px; height: 24px; margin: 0 16px 0 5px; background: #484848; }
.snap button:last-child { margin-right: 0; }
.empty { flex: 1; }
```
